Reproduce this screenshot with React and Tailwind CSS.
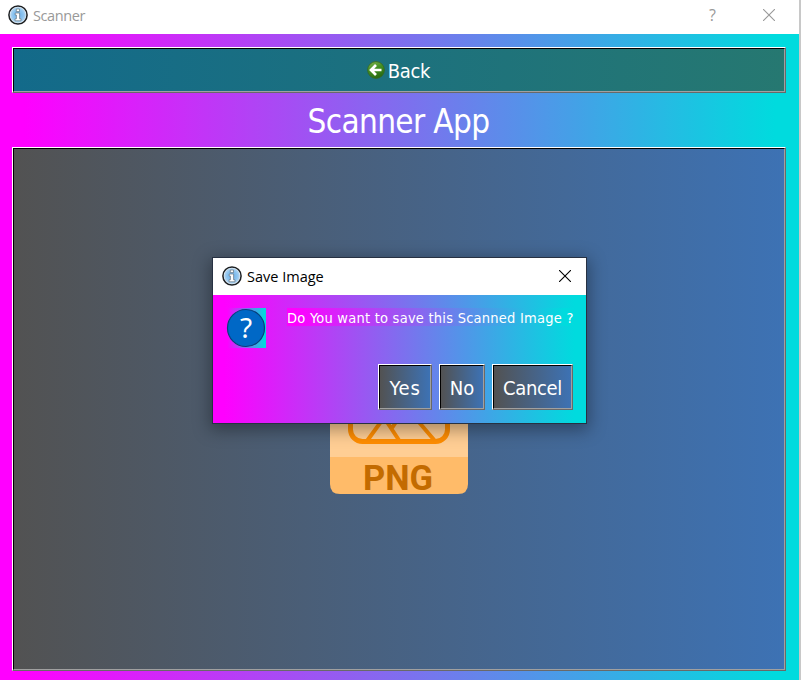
import React from "react";

const bevel =
  "border border-t-white border-l-white border-r-[#696969] border-b-[#696969]";
const bevelInner =
  "border border-t-black border-l-black border-r-[#a0a0a0] border-b-[#a0a0a0]";
const uiFont = "font-['DejaVu_Sans_Condensed','DejaVu_Sans',sans-serif] [font-stretch:condensed]";
const neon = "bg-linear-to-r/srgb from-[#ff00ff] from-3% to-[#00dbde] to-97%";
const steel = "bg-linear-to-r/srgb from-[#525252] to-[#3d72b4]";

function Bevel({ className = "", fill, children }) {
  return (
    <div className={`${bevel} ${className}`}>
      <div className={`${bevelInner} ${fill} flex h-full w-full items-center justify-center`}>
        {children}
      </div>
    </div>
  );
}

function InfoIcon() {
  return (
    <svg width="20" height="20" viewBox="0 0 20 20" className="block shrink-0">
      <defs>
        <radialGradient id="info" cx="50%" cy="50%" r="55%">
          <stop offset="0" stopColor="#6fb0e8" />
          <stop offset="0.6" stopColor="#8cc4f0" />
          <stop offset="1" stopColor="#c4dcf0" />
        </radialGradient>
      </defs>
      <circle cx="10" cy="10" r="9.1" fill="#e4ebf0" stroke="#1c1f22" strokeWidth="1.5" />
      <circle cx="10" cy="10" r="7.8" fill="url(#info)" />
      <path
        d="M8.3 4h3.2v2.6H8.3zM7.2 8h4.4v5.8h1.4v2H7V13.8h1.4V10H7.2z"
        fill="#fff"
        stroke="#66727e"
        strokeWidth="0.7"
      />
    </svg>
  );
}

function CloseIcon({ color }) {
  return (
    <svg width="12" height="12" viewBox="0 0 12 12" className="block" stroke={color} strokeWidth="1.1">
      <path d="M0 0L12 12M12 0L0 12" />
    </svg>
  );
}

function BackIcon() {
  return (
    <svg width="18" height="18" viewBox="0 0 18 18" className="block shrink-0">
      <defs>
        <linearGradient id="back" x1="0" y1="0" x2="0.4" y2="1">
          <stop offset="0" stopColor="#86b854" />
          <stop offset="0.5" stopColor="#439023" />
          <stop offset="1" stopColor="#2a6d12" />
        </linearGradient>
      </defs>
      <circle cx="9" cy="9" r="8.4" fill="url(#back)" stroke="#35661f" strokeWidth="0.8" />
      <path d="M9 4L4 9l5 5M4.5 9h10" fill="none" stroke="#fff" strokeWidth="2.7" />
    </svg>
  );
}

function PngIcon() {
  return (
    <svg width="138" height="170" viewBox="0 0 138 170" className="block overflow-visible">
      <path d="M10 0H98L138 40V134H0V10Q0 0 10 0Z" fill="#ffce94" />
      <path d="M0 133H138V160Q138 170 128 170H10Q0 170 0 160Z" fill="#ffbb69" />
      <g fill="none" stroke="#ff8d00">
        <rect x="20.5" y="40" width="97" height="77.5" rx="12" strokeWidth="5" />
        <path d="M37 117L54 93.5L69.5 117M62 104L76 83L105 117" strokeWidth="4" />
      </g>
      <text
        x="33"
        y="165.5"
        textLength="70"
        lengthAdjust="spacingAndGlyphs"
        fontFamily="Roboto, sans-serif"
        fontWeight="700"
        fontSize="35"
        fill="#c36b00"
      >
        PNG
      </text>
    </svg>
  );
}

function DialogButton({ className, labelClass, children }) {
  return (
    <Bevel className={`h-[46px] ${className}`} fill={steel}>
      <span className={`${uiFont} pt-px text-[20px] leading-6 text-white ${labelClass}`}>{children}</span>
    </Bevel>
  );
}

function SaveDialog() {
  return (
    <div className="absolute top-[257px] left-[212px] flex h-[167px] w-[375px] flex-col border border-[#273142] shadow-[0_4px_16px_2px_rgba(0,0,0,0.35)]">
      <div className="flex h-[37px] shrink-0 items-center bg-white pr-[15px] pb-px pl-[9px]">
        <InfoIcon />
        <span className="ml-[5px] grow pt-px font-['Open_Sans','Noto_Sans',sans-serif] text-[14.5px] leading-5 text-black">
          Save Image
        </span>
        <CloseIcon color="#000" />
      </div>
      <div className={`flex grow flex-col pr-[13px] pl-[13px] ${neon}`}>
        <div className="flex pt-[13px]">
          <div className={`flex h-10 w-10 items-center ${neon}`}>
            <svg width="40" height="40" viewBox="0 0 40 40">
              <circle cx="20" cy="20" r="18.5" fill="#0068c6" stroke="#06407c" strokeWidth="1.2" />
              <text
                x="20"
                y="29.5"
                textAnchor="middle"
                fontFamily="Noto Sans, sans-serif"
                fontSize="28"
                fill="#fff"
              >
                ?
              </text>
            </svg>
          </div>
          <div className={`${uiFont} ml-[21px] h-[18px] w-[286px] text-[14.5px] leading-[20px] tracking-[0.24px] whitespace-nowrap text-white ${neon}`}>
            Do You want to save this Scanned Image ?
          </div>
        </div>
        <div className="mt-[16px] flex justify-end gap-[7px]">
          <DialogButton className="w-[54px]" labelClass="tracking-[0.8px]">Yes</DialogButton>
          <DialogButton className="w-[46px]" labelClass="">No</DialogButton>
          <DialogButton className="w-[81px]" labelClass="tracking-[-0.3px]">Cancel</DialogButton>
        </div>
      </div>
    </div>
  );
}

export default function App() {
  return (
    <div className="relative flex h-[680px] w-[801px] overflow-hidden bg-[#c8c8c8]">
      <div className="flex w-[799px] flex-col">
        <div className="flex h-[34px] shrink-0 items-center bg-white pr-[24px] pb-1 pl-2">
          <InfoIcon />
          <span className="ml-[5px] grow pt-px font-['Open_Sans','Noto_Sans',sans-serif] text-[14.5px] leading-5 tracking-[-0.4px] text-[#999]">
            Scanner
          </span>
          <span className="mr-[47px] font-['Open_Sans','Noto_Sans',sans-serif] text-[16px] leading-5 text-[#999]">
            ?
          </span>
          <CloseIcon color="#999" />
        </div>
        <div className={`flex grow flex-col pt-[13px] pr-[13px] pl-[12px] ${neon}`}>
          <Bevel className="h-[46px]" fill="bg-linear-to-r/srgb from-[#136a8a] to-[#267871]">
            <BackIcon />
            <span className={`${uiFont} mr-px ml-[3px] pt-px text-[20px] leading-6 tracking-[-0.3px] text-white`}>Back</span>
          </Bevel>
          <h1 className={`${uiFont} h-[54px] pr-px text-center text-[33px] leading-[58px] tracking-[-0.65px] text-white`}>
            Scanner App
          </h1>
          <Bevel className="h-[524px]" fill={steel}>
            <PngIcon />
          </Bevel>
        </div>
      </div>
      <SaveDialog />
    </div>
  );
}
